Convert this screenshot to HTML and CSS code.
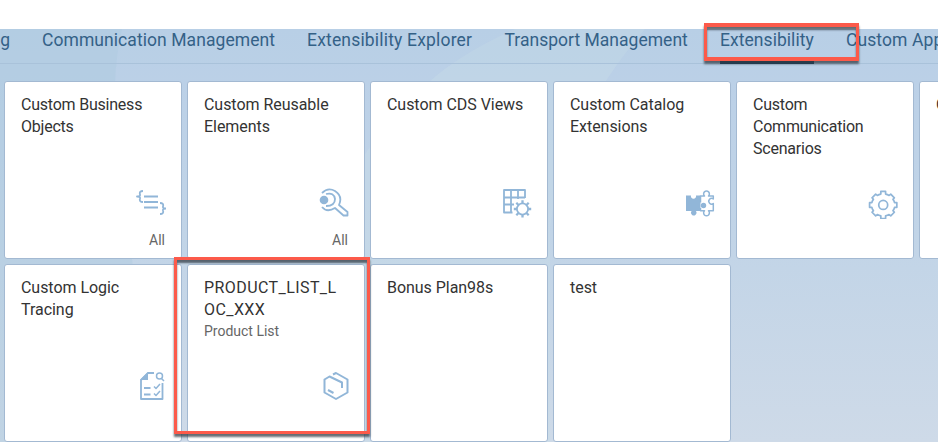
FILE: index.html
```html
<!DOCTYPE html>
<html lang="en">
<head>
<meta charset="utf-8">
<title>Extensibility</title>
<link rel="stylesheet" href="styles.css">
</head>
<body>
<div class="strip"></div>
<main class="launchpad">
  <svg class="backdrop" viewBox="0 0 938 413" preserveAspectRatio="none" aria-hidden="true">
    <defs><linearGradient id="sky" x2="0" y2="1"><stop offset="0" stop-color="#b9cfe7"/><stop offset=".5" stop-color="#c1d4e7"/><stop offset="1" stop-color="#cedae8"/></linearGradient></defs>
    <path fill="url(#sky)" d="M0 0h938v413H0z"/>
    <path fill="#a8c8dc" opacity=".35" d="M0 0h122Q116 25 115 55L150 413H0z"/>
    <path fill="#c8dce9" opacity=".4" d="M515 0Q460 25 429 53Q380 95 350 150L320 413h230V200Q560 100 645 0z"/>
  </svg>
  <nav class="tabs">
    <a class="tab tab-prev">g</a>
    <a class="tab t1">Communication Management</a>
    <a class="tab t2">Extensibility Explorer</a>
    <a class="tab t3">Transport Management</a>
    <a class="tab t4 selected">Extensibility</a>
    <a class="tab t5">Custom Apps</a>
  </nav>
  <section class="tiles">
    <article class="tile"><h3 class="narrow">Custom Business<br>Objects</h3>
      <svg class="icon" viewBox="0 0 32 32"><path d="M9 4Q5 4 6 7.500Q6.500 9.500 3 9.500Q6.500 9.500 6 11.500Q5 15 9 15M26 16Q30 16 29 19.500Q28.500 21.500 32 21.500Q28.500 21.500 29 23.500Q30 27 26 27M10 9.500h14M10 15h14M10 20.500h14"/></svg><footer>All</footer></article>
    <article class="tile"><h3>Custom Reusable<br>Elements</h3>
      <svg class="icon" viewBox="0 0 32 32"><circle class="fill" cx="7" cy="13" r="4.300"/><path d="M5 6Q11 0 18 4Q26 9 22 18L30.500 25V28.500H26.500L18 21Q10 26 5 20M9 7Q17 5 18 12Q18 19 9 19"/></svg><footer>All</footer></article>
    <article class="tile"><h3>Custom CDS Views</h3>
      <svg class="icon" viewBox="0 0 32 32"><path d="M12.500 25.500H4V3H25V11M4 10.500H25M4 17.500H14M11 3V25.500M18 3V12"/><circle cx="22.500" cy="22" r="5.600"/><path class="teeth" d="M22.500 13.300v3M22.500 27.500v3M13.800 22h3M28.200 22h3M16.300 15.800l2.200 2.200M26.500 26l2.200 2.200M16.300 28.200l2.200-2.200M26.500 18l2.200-2.200"/></svg></article>
    <article class="tile"><h3>Custom Catalog<br>Extensions</h3>
      <svg class="icon" viewBox="0 0 32 32"><path class="fill" d="M3 8.500h5a2.600 2.600 0 1 0 5 0H17.500V24H13a2.800 2.800 0 1 1-4.500 0H3z"/><circle class="fill" cx="20.500" cy="18.500" r="2.700"/><path class="thin" d="M17.500 15.500V9H21.500a2.900 2.900 0 1 1 4 0H30.300V12a2.800 2.800 0 1 0 0 4.500V23.800H25.500a2.900 2.900 0 1 1-4 0H17.500V21"/></svg></article>
    <article class="tile"><h3 class="narrow">Custom<br>Communication<br>Scenarios</h3>
      <svg class="icon gear" viewBox="0 0 32 32"><path d="M14.500 2.500h5v2.800q2 .4 3.700 1.400l1.700-1.300 3.800 3.800-1.400 1.700q1.200 1.500 1.600 3.400h2.400v4.900h-2.400q-.4 2-1.600 3.500l1.400 1.700-3.800 3.800-1.700-1.400q-1.700 1-3.700 1.400v2.800h-5v-2.800q-2-.4-3.700-1.400l-1.700 1.400-3.800-3.800 1.400-1.700q-1.200-1.500-1.600-3.500H2.700v-4.900h2.400q.4-1.900 1.600-3.400L5.300 9.200l3.800-3.800 1.700 1.300q1.700-1 3.700-1.400z"/><circle cx="17" cy="16.700" r="4.700"/></svg></article>
    <article class="tile"><h3>Custom</h3></article>
    <article class="tile"><h3>Custom Logic<br>Tracing</h3>
      <svg class="icon" viewBox="0 0 32 32"><path class="fill" d="M6 10l8-8v8z"/><path d="M20 3H14L7 10V29H28.500V13M10 18h6.500M10 24.500h6.500"/><path class="thin" d="M20 16.500l2 2 4-4.500M20 23.500l2 2 4-4.500M27.500 8.500L30 11"/><circle class="thin" cx="25.500" cy="6" r="3"/></svg></article>
    <article class="tile"><h3 class="wide">PRODUCT_LIST_L<br>OC_XXX</h3><p>Product List</p>
      <svg class="icon hex" viewBox="0 0 32 32"><path d="M14 4.500L17 3L28.500 9.500V22.500L17 29L5.500 22.500V9.500L10.500 6.500L23 12.500V18M9 20L14.500 23"/></svg></article>
    <article class="tile"><h3>Bonus Plan98s</h3></article>
    <article class="tile"><h3>test</h3></article>
  </section>
</main>
<div class="marker marker-tab"></div>
<div class="marker marker-tile"></div>
</body>
</html>
```
FILE: styles.css
```css
* { box-sizing: border-box; }
body {
  position: relative;
  width: 938px;
  height: 442px;
  margin: 0;
  overflow: hidden;
  background: #fff;
  font-family: Roboto, "Liberation Sans", sans-serif;
}
.strip { height: 29px; }
.launchpad {
  position: relative;
  height: 413px;
  overflow: hidden;
}
.backdrop {
  position: absolute;
  inset: 0;
  width: 100%;
  height: 100%;
}
.tabs {
  position: relative;
  display: flex;
  gap: 32px;
  height: 35px;
  border-bottom: 1px solid #a9c2da;
  background: rgba(180, 205, 228, .15);
}
.tab {
  flex: none;
  height: 35px;
  color: #346187;
  font-size: 17.5px;
  line-height: 22px;
  white-space: nowrap;
}
.tab-prev { width: 10px; text-align: right; direction: rtl; }
.t1 { width: 233px; letter-spacing: .07px; }
.t2 { width: 165.500px; letter-spacing: .18px; }
.t3 { width: 183.500px; letter-spacing: .02px; }
.t4 { width: 94px; letter-spacing: .05px; }
.t5 { letter-spacing: .1px; }
.selected { border-bottom: 3px solid #17395a; }
.tiles {
  position: relative;
  display: grid;
  grid-template-columns: repeat(6, 178px);
  grid-auto-rows: 178px;
  gap: 5px;
  padding: 17px 0 0 4px;
}
.tile {
  display: grid;
  grid-template-rows: auto auto 1fr;
  position: relative;
  padding: 12px 16px 10px;
  border: 1px solid #a3b9d2;
  border-radius: 3px;
  background: #fff;
}
.tile h3 {
  margin: 0;
  color: #333;
  font-size: 16px;
  font-weight: 400;
  line-height: 22px;
  letter-spacing: -.04px;
  white-space: nowrap;
}
.tile h3.narrow { letter-spacing: -.22px; }
.tile h3.wide { letter-spacing: .42px; }
.tile p {
  margin: -1px 0 0;
  color: #666;
  font-size: 14px;
  line-height: 22px;
}
.tile footer {
  position: absolute;
  right: 16px;
  bottom: 8px;
  color: #666;
  font-size: 14px;
  line-height: 20px;
}
.icon {
  position: absolute;
  right: 15.5px;
  bottom: 39px;
  width: 32px;
  height: 32px;
  fill: none;
  stroke: #91b6d8;
  stroke-width: 1.8;
  stroke-linejoin: round;
}
.icon.hex { right: 13px; stroke-width: 2; }
.icon.gear { width: 30.5px; height: 30.5px; }
.icon .fill { fill: #91b6d8; stroke: none; }
.icon .thin { stroke-width: 1.5; }
.icon .teeth { stroke-width: 2.3; }
.marker {
  position: absolute;
  border: 3px solid #fc5a4a;
  box-shadow: 0 3px 2px rgba(50, 60, 70, .75), inset 0 3px 2px rgba(50, 60, 70, .75);
}
.marker-tab { left: 704px; top: 23px; width: 155px; height: 38px; border-width: 4px 3px; }
.marker-tile { left: 174px; top: 257px; width: 196px; height: 177px; }
```
